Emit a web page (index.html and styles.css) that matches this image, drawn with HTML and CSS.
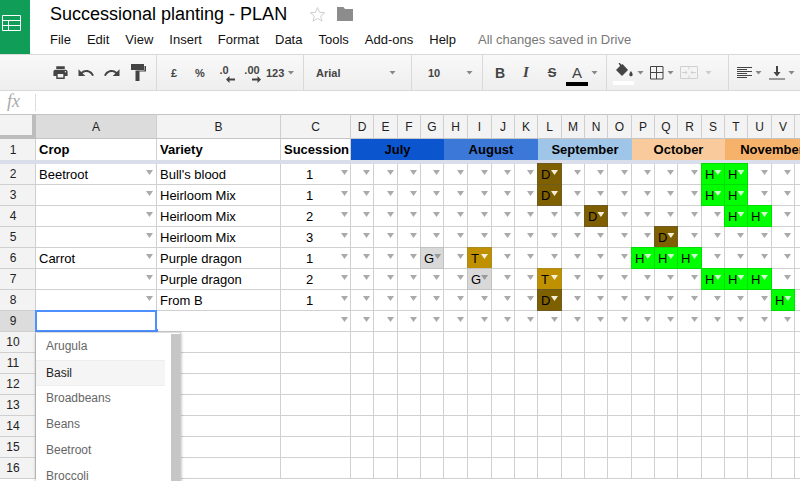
FILE: index.html
```html
<!DOCTYPE html>
<html lang="en">
<head>
  <meta charset="UTF-8" />
  <title>Successional planting - PLAN</title>
  <link rel="stylesheet" href="styles.css">
</head>
<body>
  <header class="app-header">
    <div class="logo">
      <svg width="20" height="18" viewBox="0 0 20 18" fill="none" stroke="#fff" stroke-width="1">
        <path d="M1.500 1.500h18v15h-18zM1.500 6.500h18M1.500 11.500h18M7.500 6.500v10"/>
      </svg>
    </div>
    <div class="doc-info">
      <div class="title-row">
        <span class="doc-title">Successional planting - PLAN</span>
        <svg class="star" width="17" height="16" viewBox="0 0 17 16" fill="none" stroke="#cfcfcf">
          <path d="M8.500 1.500l2 4.800 5.200.4-4 3.400 1.300 5-4.500-2.700-4.500 2.700 1.300-5-4-3.400 5.200-.4z"/>
        </svg>
        <svg class="folder" width="16" height="14" viewBox="0 0 16 14" fill="#8c8c8c">
          <path d="M0 0h6.500l1.500 2h8v12h-16z"/>
        </svg>
      </div>
      <nav class="menu">
        <span>File</span>
        <span>Edit</span>
        <span>View</span>
        <span>Insert</span>
        <span>Format</span>
        <span>Data</span>
        <span>Tools</span>
        <span>Add-ons</span>
        <span>Help</span>
        <span class="save-state">All changes saved in Drive</span>
      </nav>
    </div>
  </header>

  <div class="toolbar">
    <div class="tool-group group-history">
      <span class="tool"><svg width="17" height="17" viewBox="0 0 24 24"><path d="M19 8H5c-1.660 0-3 1.340-3 3v6h4v4h12v-4h4v-6c0-1.660-1.340-3-3-3zm-3 11H8v-5h8v5zm3-7c-.55 0-1-.45-1-1s.45-1 1-1 1 .45 1 1-.45 1-1 1zm-1-9H6v4h12V3z"/></svg></span>
      <span class="tool"><svg width="18" height="18" viewBox="0 0 24 24"><path d="M12.500 8c-2.650 0-5.050.99-6.900 2.600L2 7v9h9l-3.620-3.620c1.390-1.160 3.160-1.880 5.120-1.880 3.540 0 6.550 2.310 7.600 5.500l2.370-.78C21.080 11.030 17.150 8 12.500 8z"/></svg></span>
      <span class="tool"><svg width="18" height="18" viewBox="0 0 24 24"><path d="M18.400 10.600C16.550 8.990 14.150 8 11.500 8c-4.650 0-8.580 3.030-9.960 7.220L3.900 16c1.050-3.190 4.050-5.500 7.600-5.500 1.950 0 3.730.72 5.120 1.880L13 16h9V7l-3.600 3.600z"/></svg></span>
      <span class="tool"><svg width="15" height="17" viewBox="0 0 15 17"><path d="M0 0h13v6H0zM13.500 2H15v5.500H8.500V17h-4V6.500h9z"/></svg></span>
    </div>

    <div class="tool-group group-number">
      <span class="tool tool-text">£</span>
      <span class="tool tool-text">%</span>
      <span class="tool tool-stack stack-less">
        <span class="tool-text">.0</span>
        <svg width="9" height="7" viewBox="0 0 9 7"><path d="M0 3.500L3.500 0v2.500H9v2H3.500V7z"/></svg>
      </span>
      <span class="tool tool-stack">
        <span class="tool-text">.00</span>
        <svg width="9" height="7" viewBox="0 0 9 7"><path d="M9 3.500L5.500 0v2.500H0v2h5.500V7z"/></svg>
      </span>
      <span class="tool-caret tool-format"><span class="tool-text">123</span><i class="caret"></i></span>
    </div>

    <div class="tool-group group-select group-font">
      <span class="tool-text">Arial</span><i class="caret"></i>
    </div>

    <div class="tool-group group-select group-size">
      <span class="tool-text">10</span><i class="caret"></i>
    </div>

    <div class="tool-group group-format">
      <span class="tool glyph-b">B</span>
      <span class="tool glyph-i">I</span>
      <span class="tool glyph-s">S</span>
      <span class="tool-caret">
        <span class="text-color">A</span><i class="caret"></i>
      </span>
    </div>

    <div class="tool-group group-cell">
      <span class="tool-caret">
        <span class="fill-color">
          <svg width="17" height="14" viewBox="0 0 17 14"><path d="M2.500 0l1-.6L5.300 1.800 6.500 1l5.500 6-6 6-6-6 4-4zM15 8s-1.700 2.200-1.700 3.500.8 1.800 1.700 1.800 1.700-.6 1.700-1.800S15 8 15 8z"/></svg>
        </span>
        <i class="caret"></i>
      </span>
      <span class="tool-caret">
        <svg width="14" height="14" viewBox="0 0 14 14" fill="none" stroke="#444"><path d="M.5.500h12.500v12.500H.5zM6.500.5v12.500M.5 6.500h12.500"/></svg>
        <i class="caret"></i>
      </span>
      <span class="tool-caret tool-merge">
        <svg width="18" height="13" viewBox="0 0 18 13" fill="none" stroke="#d0d0d0"><path d="M.5.500h17v12H.5zM9 .5v3M9 9.500v3M2 6.500h4M16 6.500h-4"/><path d="M7.500 6.500l-2-2v4zM10.500 6.500l2-2v4z" fill="#d0d0d0" stroke="none"/></svg>
        <i class="caret"></i>
      </span>
    </div>

    <div class="tool-group group-align">
      <span class="tool-caret">
        <svg width="15" height="12" viewBox="0 0 15 12" fill="none" stroke="#444"><path d="M0 .5h15M0 2.500h10M0 4.500h15M0 6.500h10M0 8.500h15M0 10.500h10"/></svg>
        <i class="caret"></i>
      </span>
      <span class="tool-caret">
        <svg width="16" height="14" viewBox="0 0 16 14"><path d="M0 12.500h16v1H0zM7 0h2v6h2.500L8 10.500 4.500 6H7z"/></svg>
        <i class="caret"></i>
      </span>
    </div>
  </div>

  <div class="formula-bar">
    <span class="fx">fx</span>
  </div>

  <main class="sheet-wrap">
    <div class="sheet" id="sheet"></div>

    <ul class="suggestions">
      <li>Arugula</li>
      <li class="active">Basil</li>
      <li>Broadbeans</li>
      <li>Beans</li>
      <li>Beetroot</li>
      <li>Broccoli</li>
    </ul>
  </main>

  <script src="script.js"></script>
</body>
</html>
```

FILE: styles.css
```css
* {
  box-sizing: border-box;
}

html, body {
  height: 481px;
}

body {
  margin: 0;
  overflow: hidden;
  font-family: "Liberation Sans", Arial, sans-serif;
  font-size: 13px;
  color: #000;
  background: #fff;
}

/* title + menu */
.app-header {
  display: flex;
  height: 55px;
  border-bottom: 1px solid #d9d9d9;
}

.logo {
  width: 30px;
  background: #0f9d58;
  display: flex;
  align-items: center;
  padding: 0 0 8px 1px;
}

.doc-info {
  padding-left: 20px;
}

.title-row {
  display: flex;
  align-items: center;
  height: 28px;
}

.doc-title {
  font-size: 18px;
  width: 259px;
}

.star {
  margin-bottom: 1px;
}

.folder {
  margin-left: 11px;
  margin-bottom: 1px;
}

.menu {
  display: flex;
  gap: 16px;
  padding-top: 4px;
  color: #111;
}

.save-state {
  margin-left: 6px;
  color: #777;
}

/* toolbar */
.toolbar {
  display: flex;
  height: 36px;
  border-bottom: 1px solid #d9d9d9;
  background: linear-gradient(#f9f9f9, #eeeeee);
}

.tool-group {
  display: flex;
  align-items: center;
  height: 100%;
  border-right: 1px solid #d9d9d9;
}

.tool-group svg {
  display: block;
}

.tool-group svg:not([fill]) {
  fill: #444;
}

.group-history {
  width: 157px;
  padding-left: 47px;
}

.group-number {
  width: 147px;
  padding-left: 4px;
}

.group-select {
  justify-content: space-between;
}

.group-font {
  width: 108px;
  padding: 0 15px 0 12px;
}

.group-size {
  width: 71px;
  padding: 0 9px 0 16px;
}

.group-format {
  width: 124px;
  padding-left: 4px;
}

.group-cell {
  width: 122px;
  padding-left: 6px;
  gap: 6px;
}

.group-align {
  flex: 1;
  padding-left: 8px;
  gap: 7px;
  border-right: none;
}

.tool {
  width: 26px;
  display: flex;
  flex-direction: column;
  align-items: center;
  justify-content: center;
}

.tool-stack {
  height: 24px;
  padding-top: 1px;
}

.tool-stack svg {
  margin-left: 8px;
}

.stack-less .tool-text {
  margin-right: 4px;
}

.tool-format {
  margin-left: 1px;
}

.tool-text {
  font-size: 11px;
  font-weight: bold;
  color: #444;
}

.tool-caret {
  display: flex;
  align-items: center;
  gap: 3px;
}

.tool-merge .caret {
  margin-left: 4px;
  background: #ccc;
}

.caret {
  display: block;
  width: 7px;
  height: 4px;
  background: #888;
  clip-path: polygon(0 0, 100% 0, 50% 100%);
}

.glyph-b {
  font-weight: bold;
  font-size: 14px;
  color: #444;
}

.glyph-i {
  font-family: "Liberation Serif", serif;
  font-style: italic;
  font-weight: bold;
  font-size: 15px;
  color: #444;
}

.glyph-s {
  font-size: 13px;
  font-weight: bold;
  color: #444;
  text-decoration: line-through;
}

.text-color {
  width: 22px;
  height: 21px;
  margin-top: 5px;
  margin-left: 1px;
  text-align: center;
  font-size: 15px;
  line-height: 15px;
  color: #444;
  border-bottom: 4px solid #000;
}

.fill-color {
  width: 21px;
  height: 22px;
  margin-top: 3px;
  padding-left: 3px;
  border-bottom: 4px solid #fff;
}

/* formula bar */
.formula-bar {
  height: 23px;
  display: flex;
  align-items: center;
}

.fx {
  width: 36px;
  height: 17px;
  padding-left: 7px;
  font-family: "Liberation Serif", serif;
  font-style: italic;
  font-size: 18px;
  line-height: 15px;
  color: #aaa;
  border-right: 1px solid #ddd;
}

/* grid */
.sheet-wrap {
  position: relative;
}

.sheet {
  display: grid;
  grid-template-columns: 36px 121px 124px 70px 23px 24px 23px 23px 24px 24px 23px 23px 24px 23px 23px 24px 23px 23px 24px 23px 23px 24px 23px 24px;
  grid-template-rows: 25px 21px 4px repeat(15, 21px);
}

.cell {
  display: flex;
  align-items: center;
  min-width: 0;
  padding: 0 3px;
  white-space: nowrap;
  border-right: 1px solid #d0d0d0;
  border-bottom: 1px solid #d0d0d0;
}

.head {
  justify-content: center;
  padding: 0;
  font-size: 12px;
  color: #222;
  background: #f3f3f3;
  border-color: #cfcfcf;
}

.col-head {
  border-top: 1px solid #c4c4c4;
  border-bottom-color: #c4c4c4;
}

.corner {
  border-top: 1px solid #c4c4c4;
  border-right: 4px solid #bdbdbd;
  border-bottom: 4px solid #bdbdbd;
}

.row-head {
  font-size: 12px;
  padding-right: 9px;
}

.head.selected {
  background: #dcdcdc;
}

.title-cell {
  font-weight: bold;
  border-bottom: none;
}

.row-head.title-cell {
  font-weight: normal;
}

.month {
  justify-content: center;
  font-weight: bold;
  border: none;
}

.july { background: #0b55cf; }
.august { background: #3c78d8; }
.september { background: #9fc5e8; }
.october { background: #f9cb9c; }
.november { background: #f6b26b; }

.freeze {
  grid-column: 1 / -1;
  background: #d9deea;
}

.center {
  justify-content: center;
  padding-right: 15px;
}

.pick::after {
  content: "";
  flex: none;
  width: 7px;
  height: 5px;
  margin-left: auto;
  margin-bottom: 3px;
  background: #aaa;
  clip-path: polygon(0 0, 100% 0, 50% 100%);
}

.center.pick {
  position: relative;
}

/* the arrow sits over the cell, the number stays centred */
.center.pick::after {
  position: absolute;
  right: 2px;
  top: 6px;
}

.mark {
  z-index: 1;
  border-right: 1px solid var(--edge);
  border-bottom: 1px solid var(--edge);
  box-shadow: -1px 0 0 var(--edge), 0 -1px 0 var(--edge), -1px -1px 0 var(--edge);
}

.mark::after {
  background: #f4efd8;
}

.mark-d { background: #7f6000; --edge: #6f5a20; }
.mark-t { background: #bf9000; --edge: #ab8a20; }
.mark-g { background: #d9d9d9; --edge: #c2c2c2; }
.mark-h { background: #00ff00; --edge: #00e000; }

.mark-g::after {
  background: #999;
}

.mark-h::after {
  background: #ccffcc;
}

.current {
  position: relative;
  z-index: 2;
  border: 2px solid #4d90fe;
  margin: -1px 0 0 -1px;
}

/* fill handle */
.current::after {
  content: "";
  position: absolute;
  right: -3px;
  bottom: -3px;
  width: 3px;
  height: 4px;
  background: #4d90fe;
}

/* dropdown under the active cell */
.suggestions {
  position: absolute;
  left: 36px;
  top: 218px;
  z-index: 3;
  width: 145px;
  height: 161px;
  margin: 0;
  padding: 1px 15px 0 0;
  list-style: none;
  font-size: 12px;
  color: #666;
  background: #fff;
  border-right: 1px solid #ccc;
  border-top: 1px solid #ddd;
  box-shadow: 0 1px 3px rgba(0, 0, 0, 0.35);
}

.suggestions::after {
  content: "";
  position: absolute;
  right: 0;
  top: 1px;
  bottom: 0;
  width: 9px;
  background: #c6c6c6;
}

.suggestions li {
  height: 26px;
  line-height: 25px;
  padding-left: 10px;
}

.suggestions .active {
  color: #222;
  background: #f5f5f5;
  border-top: 1px solid #eee;
  border-bottom: 1px solid #eee;
}
```

FILE: script.js
```js
const columns = 'ABCDEFGHIJKLMNOPQRSTUVW'.split('');
const sheet = document.getElementById('sheet');

// rows 2 to 8: crop, variety, succession, then the marks by column
const plan = [
  ['Beetroot', "Bull's blood", 1, { L: 'D', S: 'H', T: 'H' }],
  ['', 'Heirloom Mix', 1, { L: 'D', S: 'H', T: 'H' }],
  ['', 'Heirloom Mix', 2, { N: 'D', T: 'H', U: 'H' }],
  ['', 'Heirloom Mix', 3, { Q: 'D' }],
  ['Carrot', 'Purple dragon', 1, { G: 'G', I: 'T', P: 'H', Q: 'H', R: 'H' }],
  ['', 'Purple dragon', 2, { I: 'G', L: 'T', S: 'H', T: 'H', U: 'H' }],
  ['', 'From B', 1, { L: 'D', V: 'H' }]
];

const months = [
  ['July', 'july', 4],
  ['August', 'august', 4],
  ['September', 'september', 4],
  ['October', 'october', 4],
  ['November', 'november', 4]
];

function addCell(className, text) {
  const cell = document.createElement('div');
  cell.className = 'cell ' + className;
  if (text !== undefined) cell.textContent = text;
  sheet.appendChild(cell);
  return cell;
}

// column letters, W is off the edge of the window
addCell('head corner');
columns.forEach(col => {
  const label = col === 'W' ? '' : col;
  addCell('head col-head' + (col === 'A' ? ' selected' : ''), label);
});

// row 1
addCell('head row-head title-cell', 1);
addCell('title-cell', 'Crop');
addCell('title-cell', 'Variety');
addCell('title-cell', 'Sucession');
months.forEach(([name, cls, span]) => {
  addCell('month ' + cls, name).style.gridColumn = 'span ' + span;
});

const band = document.createElement('div');
band.className = 'freeze';
sheet.appendChild(band);

// rows 2 to 8
plan.forEach(([crop, variety, n, marks], i) => {
  addCell('head row-head', i + 2);
  addCell('pick', crop);
  addCell('', variety);
  addCell('center pick', n);
  columns.slice(3).forEach(col => {
    const mark = marks[col];
    if (mark) addCell('pick mark mark-' + mark.toLowerCase(), mark);
    else addCell('pick');
  });
});

// row 9 holds the active cell
addCell('head row-head selected', 9);
addCell('current');
addCell('');
addCell('center pick');
columns.slice(3).forEach(() => addCell('pick'));

// empty rows
for (let row = 10; row <= 16; row++) {
  addCell('head row-head', row);
  columns.forEach(() => addCell(''));
}
```
